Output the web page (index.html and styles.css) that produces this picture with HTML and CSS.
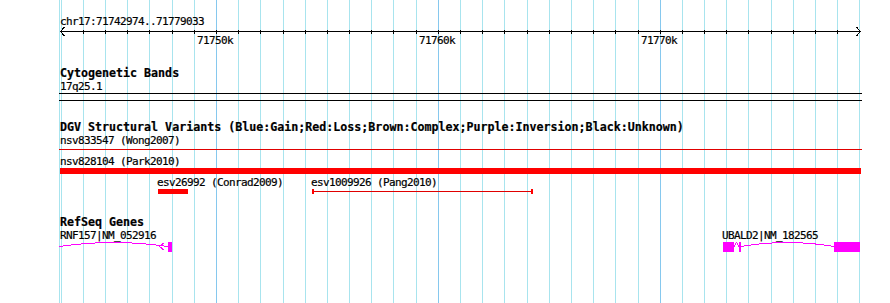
FILE: index.html
```html
<!DOCTYPE html>
<html lang="en">
<head>
    <meta charset="UTF-8">
    <title>chr17:71742974..71779033</title>
    <link rel="stylesheet" href="styles.css">
</head>
<body>
    <div class="panel">
        <!-- 1 kb grid behind the tracks -->
        <svg class="grid" width="890" height="303" shape-rendering="crispEdges">
            <path class="minor" d="M59.5 0V303M61.5 0V303M83.5 0V303M105.5 0V303M127.5 0V303M149.5 0V303M172.5 0V303M194.5 0V303M238.5 0V303M260.5 0V303M283.5 0V303M305.5 0V303M327.5 0V303M349.5 0V303M371.5 0V303M393.5 0V303M416.5 0V303M460.5 0V303M482.5 0V303M504.5 0V303M527.5 0V303M549.5 0V303M571.5 0V303M593.5 0V303M615.5 0V303M638.5 0V303M682.5 0V303M704.5 0V303M726.5 0V303M748.5 0V303M771.5 0V303M793.5 0V303M815.5 0V303M837.5 0V303M859.5 0V303"/>
            <path class="major" d="M216.5 0V303M438.5 0V303M660.5 0V303"/>
        </svg>

        <div class="track ruler">
            <div class="label">chr17:71742974..71779033</div>
            <svg class="glyph" width="890" height="6" viewBox="0 28 890 6" shape-rendering="crispEdges">
                <path class="axis" d="M60 31.5H861"/>
                <path class="axis" d="M64.5 27L60.5 31.5L64.5 36M856.5 27L860.5 31.5L856.5 36"/>
                <path class="axis" d="M83.5 30V34M105.5 30V34M127.5 30V34M149.5 30V34M172.5 30V34M194.5 30V34M216.5 30V34M238.5 30V34M260.5 30V34M283.5 30V34M305.5 30V34M327.5 30V34M349.5 30V34M371.5 30V34M393.5 30V34M416.5 30V34M438.5 30V34M460.5 30V34M482.5 30V34M504.5 30V34M527.5 30V34M549.5 30V34M571.5 30V34M593.5 30V34M615.5 30V34M638.5 30V34M660.5 30V34M682.5 30V34M704.5 30V34M726.5 30V34M748.5 30V34M771.5 30V34M793.5 30V34M815.5 30V34M837.5 30V34"/>
            </svg>
            <div class="labels">
                <span style="left:197px">71750k</span>
                <span style="left:419px">71760k</span>
                <span style="left:641px">71770k</span>
            </div>
        </div>

        <div class="track">
            <div class="title">Cytogenetic Bands</div>
            <div class="label">17q25.1</div>
            <div class="band"></div>
        </div>

        <div class="track">
            <div class="title">DGV Structural Variants (Blue:Gain;Red:Loss;Brown:Complex;Purple:Inversion;Black:Unknown)</div>
            <div class="row first">
                <div class="label">nsv833547 (Wong2007)</div>
                <svg class="glyph" width="890" height="6" viewBox="0 147 890 6" shape-rendering="crispEdges">
                    <path class="loss-line" d="M59 149.5H862"/>
                </svg>
            </div>
            <div class="row">
                <div class="label">nsv828104 (Park2010)</div>
                <svg class="glyph" width="890" height="6" viewBox="0 168 890 6" shape-rendering="crispEdges">
                    <rect class="loss" x="60" y="168" width="801" height="6"/>
                </svg>
            </div>
            <div class="row">
                <div class="labels">
                    <span style="left:157px">esv26992 (Conrad2009)</span>
                    <span style="left:311px">esv1009926 (Pang2010)</span>
                </div>
                <svg class="glyph" width="890" height="6" viewBox="0 189 890 6" shape-rendering="crispEdges">
                    <rect class="loss" x="158" y="189" width="30" height="5"/>
                    <path class="loss-line" d="M312 191.5H533"/>
                    <rect class="loss" x="312" y="189" width="2" height="5"/>
                    <rect class="loss" x="531" y="189" width="2" height="5"/>
                </svg>
            </div>
        </div>

        <div class="track genes">
            <div class="title">RefSeq Genes</div>
            <div class="labels">
                <span style="left:60px">RNF157|NM_052916</span>
                <span style="left:722px">UBALD2|NM_182565</span>
            </div>
            <svg class="glyph" width="890" height="10" viewBox="0 242 890 10" shape-rendering="crispEdges">
                <path class="intron" d="M59 246.5Q113.5 238.5 168 246.5"/>
                <path class="intron" d="M164.5 242.5L159.5 246.5L164.5 250.5"/>
                <rect class="exon" x="168" y="242" width="4" height="10"/>

                <rect class="exon" x="723" y="242" width="11" height="10"/>
                <path class="intron" d="M734 246.5L736.5 242.5L739 246.5"/>
                <rect class="exon" x="739" y="242" width="2" height="10"/>
                <path class="intron" d="M741 246.5Q787.5 238.5 834 246.5"/>
                <rect class="exon" x="834" y="242" width="26" height="10"/>
            </svg>
        </div>
    </div>
</body>
</html>
```

FILE: styles.css
```css
body {
    margin: 0;
    background-color: white;
    font-family: "DejaVu Sans Mono", "Liberation Mono", monospace;
    font-size: 11px;
    letter-spacing: -0.62px;
    line-height: 13px;
    color: black;
    -webkit-text-stroke: 0.2px black;
}
.panel {
    position: relative;
    width: 890px;
    height: 303px;
    overflow: hidden;
}
.grid {
    position: absolute;
    top: 0;
    left: 0;
}
.grid path {
    fill: none;
    stroke-width: 1;
}
.grid .minor {
    stroke: #a8e4ee;
}
.grid .major {
    stroke: #86c8ee;
}
.track {
    position: relative;
    margin-top: 20px;
}
.track.ruler {
    margin-top: 0;
    padding-top: 15px;
}
.track.genes {
    margin-top: 21px;
}
.title {
    margin-left: 60px;
    height: 13px;
    font-size: 11.65px;
    font-weight: bold;
    letter-spacing: 0;
    white-space: nowrap;
}
.label {
    margin-left: 60px;
    height: 13px;
    white-space: nowrap;
}
.labels {
    position: relative;
    height: 13px;
}
.labels span {
    position: absolute;
    top: 0;
    white-space: nowrap;
}
.glyph {
    display: block;
    overflow: visible;
}
.axis {
    fill: none;
    stroke: black;
    stroke-width: 1;
}
.band {
    margin-left: 59px;
    width: 803px;
    height: 6px;
    border-top: 1px solid black;
    border-bottom: 1px solid black;
}
.row {
    margin-top: 2px;
}
.row.first {
    margin-top: 0;
}
.loss {
    fill: #ff0000;
}
.loss-line {
    fill: none;
    stroke: #e00000;
    stroke-width: 1;
}
.exon {
    fill: #ff00ff;
}
.intron {
    fill: none;
    stroke: #ff00ff;
    stroke-width: 1;
}
```
